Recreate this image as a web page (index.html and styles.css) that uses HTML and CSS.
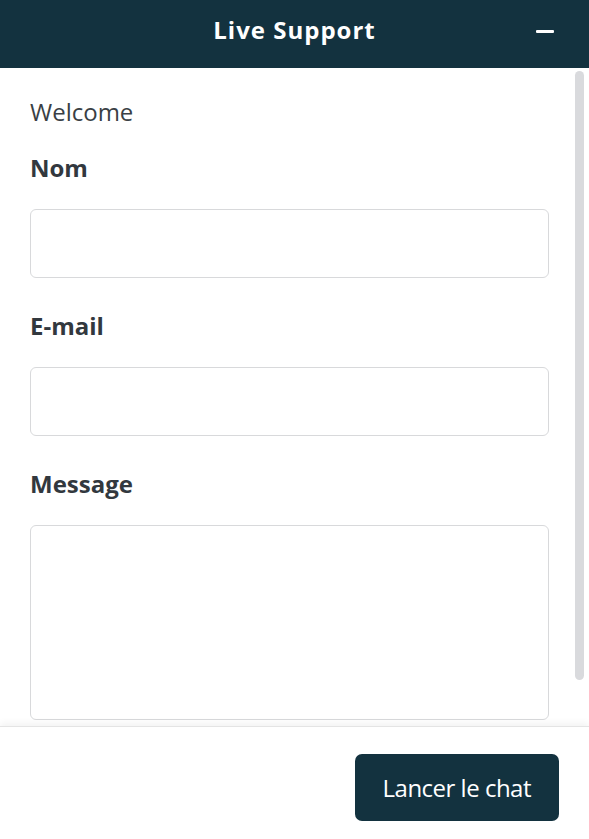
FILE: index.html
```html
<!DOCTYPE html>
<html lang="fr">
<head>
<meta charset="utf-8">
<title>Live Support</title>
<link rel="stylesheet" href="styles.css">
</head>
<body>
<div class="widget">
  <header class="head">
    <h1 class="title">Live Support</h1>
    <button class="min" aria-label="Réduire"><span class="min-bar"></span></button>
  </header>
  <div class="scroller">
    <main class="content">
      <p class="welcome">Welcome</p>
      <div class="field">
        <label class="label" for="nom">Nom</label>
        <input class="input" id="nom" type="text">
      </div>
      <div class="field">
        <label class="label" for="email">E-mail</label>
        <input class="input" id="email" type="email">
      </div>
      <div class="field">
        <label class="label" for="msg">Message</label>
        <textarea class="input area" id="msg"></textarea>
      </div>
    </main>
    <div class="thumb"></div>
  </div>
  <footer class="foot">
    <button class="start">Lancer le chat</button>
  </footer>
</div>
</body>
</html>
```
FILE: styles.css
```css
* { box-sizing: border-box; }
html, body { margin: 0; padding: 0; }
body {
  font-family: "Open Sans", "Noto Sans", sans-serif;
  color: #32383e;
  background: #fff;
}
.widget {
  display: flex;
  flex-direction: column;
  height: 839px;
  overflow: hidden;
}
.head {
  flex: 0 0 68px;
  background: #13323f;
  display: flex;
  align-items: flex-start;
  justify-content: center;
  padding-top: 12px;
  position: relative;
}
.title {
  margin: 0;
  font-size: 24px;
  line-height: 36px;
  font-weight: 700;
  color: #fff;
  letter-spacing: 1px;
}
.min {
  position: absolute;
  right: 35px;
  top: 22px;
  width: 18px;
  height: 18px;
  padding: 0;
  border: 0;
  background: transparent;
  display: flex;
  align-items: center;
}
.min-bar {
  display: block;
  width: 18px;
  height: 3px;
  background: #fff;
  border-radius: 1px;
}
.scroller {
  flex: 1 1 auto;
  min-height: 0;
  overflow: hidden;
  position: relative;
}
.content {
  padding: 26px 40px 24px 30px;
}
.thumb {
  position: absolute;
  top: 3px;
  right: 5px;
  width: 9px;
  height: 609px;
  background: #d9dadd;
  border-radius: 5px;
}
.welcome {
  margin: 0 0 20px;
  font-size: 24px;
  line-height: 36px;
  color: #3a3f45;
}
.field {
  display: flex;
  flex-direction: column;
  margin-bottom: 30px;
}
.label {
  font-size: 24px;
  line-height: 36px;
  font-weight: 700;
  margin-bottom: 23px;
}
.input {
  display: block;
  width: 100%;
  height: 69px;
  border: 1px solid #d8d9db;
  border-radius: 6px;
  background: #fff;
  font: inherit;
  padding: 8px 16px;
}
.area {
  height: 195px;
  resize: none;
}
.foot {
  flex: 0 0 113px;
  border-top: 1px solid #e4e4e4;
  box-shadow: 0 -3px 7px rgba(0, 0, 0, 0.05);
  display: flex;
  justify-content: flex-end;
  align-items: flex-start;
  padding: 27px 30px 0 0;
  position: relative;
  background: #fff;
}
.start {
  height: 67px;
  padding: 0 28px;
  border: 0;
  border-radius: 7px;
  background: #13323f;
  color: #fff;
  font-family: inherit;
  font-size: 24px;
  line-height: 36px;
  letter-spacing: -0.5px;
}
```
